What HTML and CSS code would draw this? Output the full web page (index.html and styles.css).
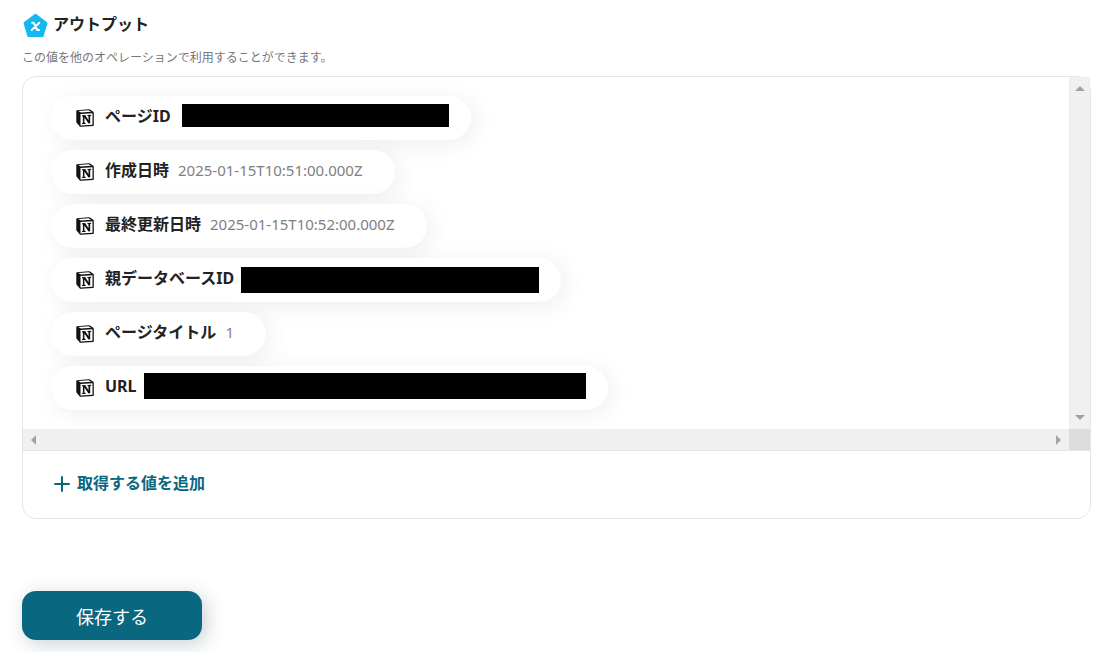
FILE: index.html
```html
<!DOCTYPE html>
<html lang="ja">
<head>
  <meta charset="UTF-8">
  <meta name="viewport" content="width=device-width, initial-scale=1.0">
  <title>アウトプット</title>
  <link rel="stylesheet" href="styles.css">
</head>
<body>

  <!-- Notion icon, shared by all rows -->
  <svg class="sprite" width="0" height="0" aria-hidden="true">
    <symbol id="notion" viewBox="0 0 18 18">
      <path d="M1 1.2Q.3 1.2.3 2V13.2L3.6 17.2Q4 17.8 5 17.7L17 17Q17.8 17 17.8 16V3.8Q17.8 3.2 17.2 2.8L14 .6Q13.4.2 12.6.3Z" fill="#111"/>
      <path d="M2.3 1.9 12.6 1.2 15.2 2.8 4.8 3.5Z" fill="#fff"/>
      <path d="M4.5 5 16.5 4.2V15.8L4.5 16.5Z" fill="#fff"/>
      <path d="M6 6.3 9.2 6.1 12.5 11.2V7.3L11.4 7V6L15.2 5.8V6.7L14.2 7V14.3L12.5 14.5 8.4 8.5V13.6L9.6 13.9V14.9L5.9 15.1V14.2L6.9 13.8V7.5L6 7.2Z" fill="#111"/>
    </symbol>
  </svg>

  <main class="page">
    <!-- Heading -->
    <div class="heading">
      <svg class="heading-icon" viewBox="0 0 24 24" aria-hidden="true">
        <path d="M12 3.2 21.1 10 17.8 20.8H6.2L2.9 10Z" fill="#12b8ee" stroke="#12b8ee" stroke-width="3" stroke-linejoin="round"/>
        <path d="M9 9.6H10.4L13.6 16H15.2M15.4 9.6 8.6 16" fill="none" stroke="#fff" stroke-width="1.7" stroke-linecap="round" stroke-linejoin="round"/>
      </svg>
      <h1>アウトプット</h1>
    </div>
    <p class="description">この値を他のオペレーションで利用することができます。</p>

    <!-- Output values -->
    <section class="card">
      <div class="scroll-area">
        <ul class="outputs">
          <li class="output">
            <svg class="notion"><use href="#notion"/></svg>
            <span class="label">ページID</span>
            <span class="masked masked-page"></span>
          </li>
          <li class="output">
            <svg class="notion"><use href="#notion"/></svg>
            <span class="label">作成日時</span>
            <span class="value">2025-01-15T10:51:00.000Z</span>
          </li>
          <li class="output">
            <svg class="notion"><use href="#notion"/></svg>
            <span class="label">最終更新日時</span>
            <span class="value">2025-01-15T10:52:00.000Z</span>
          </li>
          <li class="output">
            <svg class="notion"><use href="#notion"/></svg>
            <span class="label">親データベースID</span>
            <span class="masked masked-database"></span>
          </li>
          <li class="output">
            <svg class="notion"><use href="#notion"/></svg>
            <span class="label">ページタイトル</span>
            <span class="value">1</span>
          </li>
          <li class="output">
            <svg class="notion"><use href="#notion"/></svg>
            <span class="label">URL</span>
            <span class="masked masked-url"></span>
          </li>
        </ul>
        <div class="bar bar-vertical">
          <svg width="10" height="5" viewBox="0 0 10 5"><path d="M0 5 5 0 10 5Z"/></svg>
          <svg width="10" height="5" viewBox="0 0 10 5"><path d="M0 0 5 5 10 0Z"/></svg>
        </div>
        <div class="bar bar-horizontal">
          <svg width="5" height="10" viewBox="0 0 5 10"><path d="M5 0 0 5 5 10Z"/></svg>
          <svg width="5" height="10" viewBox="0 0 5 10"><path d="M0 0 5 5 0 10Z"/></svg>
        </div>
        <div class="bar-corner"></div>
      </div>
      <div class="card-footer">
        <button type="button" class="add-button">
          <svg width="16" height="16" viewBox="0 0 16 16" aria-hidden="true"><path d="M8 1V15M1 8H15" stroke="currentColor" stroke-width="2" stroke-linecap="round"/></svg>
          取得する値を追加
        </button>
      </div>
    </section>

    <button type="submit" class="save-button">保存する</button>
  </main>

</body>
</html>
```

FILE: styles.css
```css
* {
  box-sizing: border-box;
}

body {
  margin: 0;
  background-color: #fff;
  color: #222;
  font-family: "Noto Sans", "Noto Sans CJK JP", sans-serif;
  font-size: 16px;
  line-height: 24px;
}

button {
  border: 0;
  font-family: inherit;
  cursor: pointer;
}

.sprite {
  position: absolute;
}

.page {
  padding: 12px 21px 12px 22px;
}

/* Heading */
.heading {
  display: flex;
  align-items: flex-start;
  gap: 4px;
}

.heading-icon {
  width: 27px;
  height: 27px;
}

.heading h1 {
  margin: 0;
  font-size: 16px;
  line-height: 24px;
}

.description {
  margin: 10px 0 9px;
  color: #777;
  font-size: 12px;
  line-height: 18px;
}

/* Card */
.card {
  border: 1px solid #e5e5e5;
  border-radius: 14px;
}

.scroll-area {
  display: grid;
  grid-template-columns: 1fr 21px;
  grid-template-rows: auto 21px;
  border-bottom: 1px solid #e5e5e5;
}

.outputs {
  display: flex;
  flex-direction: column;
  align-items: flex-start;
  gap: 10px;
  margin: 0;
  padding: 19px 28px;
  border-top-left-radius: 13px;
  list-style: none;
  overflow: hidden;
}

.output {
  display: flex;
  align-items: center;
  height: 44px;
  padding: 0 32px 0 25px;
  border-radius: 22px;
  background-color: #fff;
  box-shadow: 4px 4px 24px rgba(0, 0, 0, 0.07);
}

.notion {
  width: 18px;
  height: 18px;
  margin-right: 11px;
}

.label {
  padding-bottom: 4px;
  font-weight: bold;
}

.value {
  margin-left: 9px;
  padding-bottom: 4px;
  color: #808080;
  font-size: 15px;
}

/* Hidden values */
.masked {
  height: 26px;
  margin: 0 -10px 0 7px;
  background-color: #000;
}

.masked-page {
  width: 267px;
  height: 23px;
  margin-bottom: 5px;
  margin-left: 11px;
}

.masked-database {
  width: 298px;
}

.masked-url {
  width: 442px;
  margin-bottom: 5px;
}

/* Scroll bars */
.bar {
  display: flex;
  align-items: center;
  justify-content: space-between;
  background-color: #f0f0f0;
  fill: #a3a3a3;
}

.bar-vertical {
  flex-direction: column;
  padding: 9px 0;
}

.bar-horizontal {
  padding: 0 8px;
}

.bar-corner {
  background-color: #dcdcdc;
}

.card-footer {
  padding: 20px 31px 22px;
}

.add-button {
  display: flex;
  align-items: center;
  gap: 7px;
  padding: 0;
  background: none;
  color: #0a6780;
  font-size: 16px;
  font-weight: bold;
  line-height: 25px;
}

/* Save button */
.save-button {
  display: block;
  width: 180px;
  height: 49px;
  margin-top: 72px;
  border-radius: 14px;
  background-color: #0a6780;
  box-shadow: 4px 4px 20px rgba(10, 40, 60, 0.22);
  color: #fff;
  font-size: 18px;
}
```
